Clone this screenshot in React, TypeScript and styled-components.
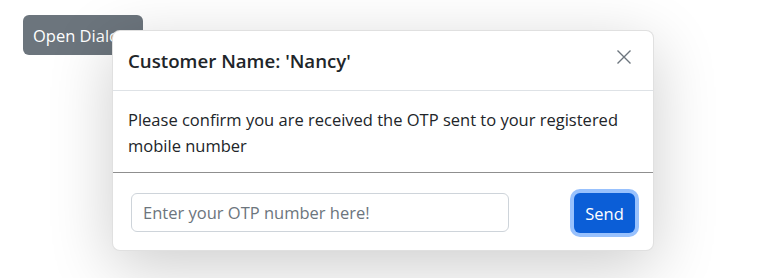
import React from "react";
import styled, { createGlobalStyle } from "styled-components";

const Global = createGlobalStyle`
  * { box-sizing: border-box; }
  html, body { margin: 0; padding: 0; background: #fff; }
  body {
    font-family: "Open Sans", "Noto Sans", Roboto, sans-serif;
    color: #212529;
    width: 764px;
    height: 278px;
    overflow: hidden;
  }
`;

const Page = styled.div`
  position: relative;
  width: 764px;
  height: 278px;
  padding: 15px 0 0 23px;
`;

const OpenButton = styled.button`
  width: 120px;
  height: 40px;
  padding: 0 0 0 10px;
  text-align: left;
  border: none;
  border-radius: 6px;
  background: #6c757d;
  color: #fff;
  font-family: inherit;
  font-size: 16.5px;
  cursor: pointer;
  white-space: nowrap;
  overflow: hidden;
`;

const Dialog = styled.div`
  position: absolute;
  left: 112px;
  top: 30px;
  width: 542px;
  background: #fff;
  border: 1px solid rgba(0, 0, 0, 0.12);
  border-radius: 8px;
  box-shadow: 0 16px 64px rgba(0, 0, 0, 0.2);
  display: flex;
  flex-direction: column;
`;

const Header = styled.div`
  height: 60px;
  display: flex;
  align-items: center;
  justify-content: space-between;
  padding: 2px 16px 0 15px;
  border-bottom: 1px solid #dee2e6;
`;

const Title = styled.h5`
  margin: 0;
  font-size: 18.7px;
  font-weight: 600;
  line-height: 1.2;
`;

const CloseButton = styled.button`
  width: 26px;
  height: 26px;
  padding: 0;
  border: none;
  background: transparent;
  display: flex;
  align-items: center;
  justify-content: center;
  cursor: pointer;
  margin-top: -10px;
`;

const Body = styled.div`
  padding: 16px 16px 13px 15px;
  font-size: 16.5px;
  line-height: 26px;
  border-bottom: 1px solid #8f8f8f;
`;

const Footer = styled.div`
  display: flex;
  align-items: center;
  justify-content: space-between;
  padding: 19px 18px 17px 18px;
`;

const OtpInput = styled.input`
  width: 378px;
  height: 39px;
  padding: 0 11px;
  border: 1px solid #ced4da;
  border-radius: 6px;
  font-family: inherit;
  font-size: 16.5px;
  color: #212529;
  outline: none;
  &::placeholder { color: #6c757d; }
`;

const SendButton = styled.button`
  width: 61px;
  height: 40px;
  border: none;
  border-radius: 6px;
  background: #0b5ed7;
  color: #fff;
  font-family: inherit;
  font-size: 16.5px;
  box-shadow: 0 0 0 4px #98c1fd;
  cursor: pointer;
  margin-top: 1px;
`;

export default function App() {
  return (
    <>
      <Global />
      <Page>
        <OpenButton>Open Dialog</OpenButton>
        <Dialog role="dialog">
          <Header>
            <Title>Customer Name: 'Nancy'</Title>
            <CloseButton aria-label="Close">
              <svg width="16" height="16" viewBox="0 0 16 16">
                <path d="M1.5 1.5 L14.5 14.5 M14.5 1.5 L1.5 14.5" stroke="#6c757d" strokeWidth="1.4" fill="none" />
              </svg>
            </CloseButton>
          </Header>
          <Body>
            Please confirm you are received the OTP sent to your registered mobile number
          </Body>
          <Footer>
            <OtpInput placeholder="Enter your OTP number here!" />
            <SendButton>Send</SendButton>
          </Footer>
        </Dialog>
      </Page>
    </>
  );
}
